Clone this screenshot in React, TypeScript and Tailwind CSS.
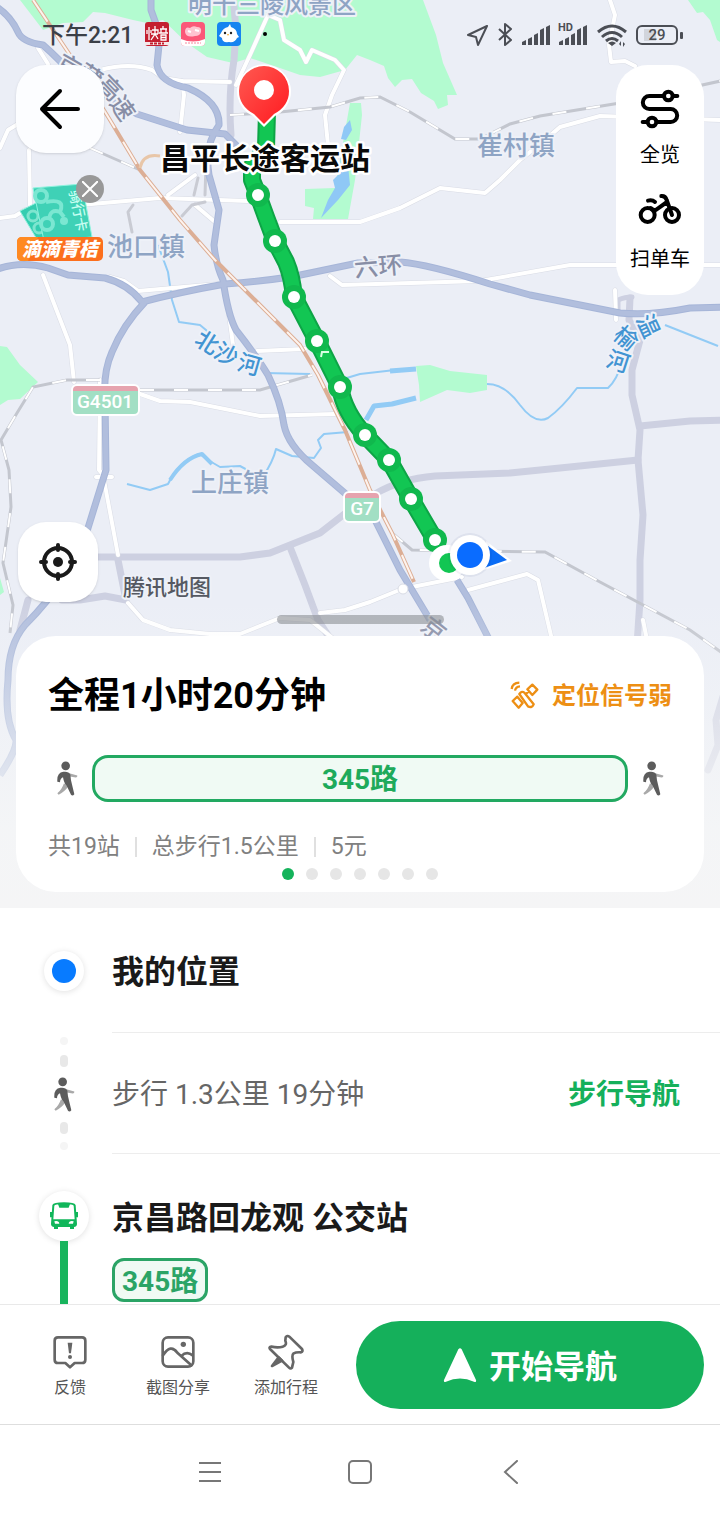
import React from 'react';

const ROUTE =
  'M267 112 L266 148 L252 166 L252 180 L258 195 L266 217 L275 241 L286 262 Q292 276 294 297 L317 341 L340 387 Q344 412 365 435 L389 460 L411 499 L435 540';

const STOPS: [number, number][] = [
  [258, 195], [275, 241], [294, 297], [317, 341], [340, 387],
  [365, 435], [389, 460], [411, 499], [435, 540],
];

const WHITE_ROADS = [
  'M100 70 Q130 62 152 70 L163 78 L182 81 L230 82',
  'M38 48 L48 64',
  'M182 81 L184 95 L180 132',
  'M236 85 L250 55 L268 15 L280 20 L284 40 L300 50 L306 62 L312 50 L335 60 L344 70 L332 95 L325 115 L328 145',
  'M0 148 L8 130 L18 124',
  'M29 150 L30 205 M0 218 L15 216 L25 210 L80 205 L160 198 L248 201 M280 222 L360 222 L400 208 L440 188 L485 193 L500 180 L520 160 L545 140 L560 127 L600 116 L720 120',
  'M43 275 L70 345 L74 382',
  'M110 277 L124 281 L138 291 L218 284',
  'M100 380 L99 470 L104 476 M96 477 L112 477 M104 480 L118 555',
  'M140 394 L160 401 L190 402 L260 416 L335 414',
  'M227 300 L233 345 M257 351 L305 349',
  'M330 276 L342 285 L480 281 L570 265 L720 265',
  'M610 0 L615 15 L609 45 L611 62 L625 61 L635 66',
  'M128 603 L143 620 L170 630 L210 634 L240 634 L280 618 L310 620 L335 640',
  'M320 613 L345 610 L370 602 L402 589 L462 577',
  'M468 590 L490 584 L527 574 L538 580 L552 640',
  'M615 290 L616 320 M643 620 L647 640',
  'M168 195 L195 175 M195 205 L215 222',
];

const GREY_ROADS = [
  'M233 -5 L236 30 L234 60 Q228 95 231 135',
  'M98 557 L240 557 L270 553 L320 533 L347 512 M375 494 Q400 479 435 476 L510 473 L560 468 L638 460',
  'M290 547 L305 585 L318 620 L331 640',
  'M630 298 L629 320 L640 340 L632 370 L632 395 L640 430 L638 460 L643 515 L640 560 L640 600 L637 645',
  'M640 426 L690 421 L725 420',
  'M118 560 L126 600 L105 596 L80 600 L62 600',
  'M28 600 L20 630 M725 690 L716 720 L718 745 L708 770',
];

const HIGHWAYS = [
  'M-5 6 Q10 15 18 32 Q22 42 43 45 Q58 58 80 82 L137 114 L187 130 L225 134 L237 146',
  'M151 -5 L151 10 L160 35 L157 65 Q160 83 188 88 Q220 102 219 125 Q204 145 209 175 L219 210 L214 245 Q216 265 223 280 Q228 315 236 330 Q258 358 268 375 Q281 402 284 425 Q288 445 312 465 L347 495 L375 520 L400 570 L430 620 L440 645',
  'M-5 270 Q20 260 48 268 L68 275 L105 278 Q128 284 142 302 Q180 292 225 284 Q280 280 310 273 L358 263 L400 262 Q428 264 490 284 L530 295 L620 313 Q650 316 690 308 L725 307',
  'M145 302 Q123 325 112 352 Q103 372 105 400 L106 470 L88 528 Q70 580 25 625 Q8 645 8 680 Q4 720 16 740 Q17 750 0 775',
  'M457 580 L468 598 L492 645',
];

const RAILS = [
  'M230 115 L280 112 L330 107 L360 98 L380 97 L410 112 L455 139 L480 139 L510 124 L540 116 L620 103 L725 80',
  'M100 380 L67 380 L33 387 L17 413 L1 440 L9 470 L11 507 L3 563 L13 605 L10 633',
  'M140 390 L260 390 L312 375',
  'M392 533 L412 550 L545 552 L600 582 L690 630 L725 655',
  'M90 148 L140 170',
];

const RIVERS = [
  'M158 245 L168 272 L172 300 L179 322 L200 325 L212 335',
  'M127 484 L150 490 L168 484 Q180 460 200 454 L208 460 L220 467 L240 466 L262 478 Q273 462 276 449 L292 456 L314 458 L321 448 L318 440 L324 434 L348 432',
  'M265 373 L310 374 M340 380 L360 374 L395 370',
  'M487 384 Q505 384 520 405 Q535 425 548 418 Q562 408 577 388 L608 388 Q617 380 622 362',
  'M665 325 L718 346',
];

const ORANGE_RAIL =
  'M33 0 L70 55 L110 120 L140 170 L180 220 L215 260 L255 300 L300 345 L318 375 L345 430 L370 490 L392 533 L414 582';

function MapDrawing() {
  return (
    <svg
      className="absolute inset-0 h-full w-full"
      viewBox="0 0 720 908"
      preserveAspectRatio="xMidYMin slice"
      aria-hidden="true"
      fontFamily='"Noto Sans CJK SC", sans-serif'
    >
      <defs>
        <linearGradient id="haze" x1="0" y1="0" x2="0" y2="1">
          <stop offset="0" stopColor="#f5f6f7" stopOpacity="0" />
          <stop offset="0.75" stopColor="#f5f6f7" stopOpacity="0.9" />
          <stop offset="1" stopColor="#f5f5f6" />
        </linearGradient>
        <linearGradient id="pin" x1="0" y1="0" x2="1" y2="1">
          <stop offset="0" stopColor="#ff5a52" />
          <stop offset="1" stopColor="#ff1a20" />
        </linearGradient>
      </defs>
      <rect width="720" height="908" fill="#ebeef6" />
      <g fill="#b3fbd0">
        <path d="M20 0 L43 30 L63 23 L83 22 L93 12 L105 13 L133 20 L147 23 L163 20 L187 43 L207 57 L233 63 L250 58 L277 67 L300 75 L320 77 L345 70 L357 55 L370 60 L384 66 L388 78 L395 87 L402 80 L412 79 L421 93 L434 101 L438 109 L448 105 L447 95 L457 95 L443 63 L436 35 L423 0Z" />
        <path d="M688 0 L697 13 L703 12 L710 20 L717 40 L720 42 L720 0Z" />
        <path d="M350 103 L361 103 L362 115 L355 180 L348 219 L313 219 L314 208 L305 206 L305 189 L335 188Z" />
        <path d="M0 346 L7 347 L20 365 L38 382 L20 399 L8 400 L0 405Z M0 578 L4 592 L0 595Z" />
        <path d="M416 366 L430 365 L450 371 L487 375 L487 390 L470 393 L447 390 L420 402 L419 385Z" />
      </g>
      <path fill="#8fc8f6" d="M350 120 L352 130 L346 140 L341 139 L344 127Z M340 150 L348 165 L350 185 L338 200 L321 218 L328 200 L335 188 L333 180 L341 172Z" />
      <g fill="none" stroke="#92cbf5" strokeWidth="2" strokeLinejoin="round">
        {RIVERS.map((d) => <path key={d} d={d} />)}
        <path strokeWidth="5" d="M390 371 L416 369 M366 420 L374 406 L392 404 L416 398" />
        <path strokeWidth="4" d="M170 480 Q184 458 202 454 L212 464" />
      </g>
      <g fill="none" strokeLinejoin="round" strokeLinecap="round">
        {GREY_ROADS.map((d) => <path key={d} d={d} stroke="#cdd0e1" strokeWidth="7" />)}
        <path d="M618 311 V301 Q618 298 632 297" stroke="#cdd0e1" strokeWidth="5" />
        {WHITE_ROADS.map((d) => <path key={d} d={d} stroke="#d9dce5" strokeWidth="5" />)}
        {WHITE_ROADS.map((d) => <path key={d} d={d} stroke="#ffffff" strokeWidth="4" />)}
        <path d="M132 232 L128 212 L133 205 M182 216 L192 205 L205 202 M194 195 L198 178 M205 195 L206 165" stroke="#c9cbd3" strokeWidth="3" />
      </g>
      <g fill="none">
        {RAILS.map((d) => <path key={d} d={d} stroke="#c3c6ce" strokeWidth="3" />)}
        {RAILS.map((d) => <path key={d} d={d} stroke="#ffffff" strokeWidth="2" strokeDasharray="14 20" />)}
      </g>
      <g fill="none" strokeLinejoin="round">
        {HIGHWAYS.map((d) => <path key={d} d={d} stroke="#a6b5d8" strokeWidth="7" />)}
        {HIGHWAYS.map((d) => <path key={d} d={d} stroke="#b1bedd" strokeWidth="5" />)}
        <path stroke="#dcae95" strokeWidth="4" d={ORANGE_RAIL} />
        <path stroke="#fdf3ee" strokeWidth="2" strokeDasharray="26 16" d={ORANGE_RAIL} />
        <path stroke="#e8c6a8" strokeWidth="3" d="M140 168 Q143 153 160 156" />
      </g>
      <circle cx="403" cy="589" r="5" fill="#fff" stroke="#d9dce5" />

      <g stroke="#eef1f8" strokeWidth="4" paintOrder="stroke" strokeLinejoin="round" fontWeight="500">
        <g fill="#8ea4c4" fontSize="26">
          <text x="188" y="13" fontSize="24">明十三陵风景区</text>
          <text x="477" y="155">崔村镇</text>
          <text x="107" y="256">池口镇</text>
          <text x="191" y="492">上庄镇</text>
        </g>
        <g fill="#888ea6" fontSize="24">
          <text x="355" y="277" transform="rotate(-5 355 276)">六环</text>
          <text x="-12" y="9" transform="translate(69 66) rotate(30)">京</text>
          <text x="-12" y="9" transform="translate(90 76) rotate(34)">藏</text>
          <text x="-12" y="9" transform="translate(110 88) rotate(46)">高</text>
          <text x="-12" y="9" transform="translate(123 108) rotate(56)">速</text>
          <text x="-12" y="9" transform="translate(434 629) rotate(38)">京</text>
        </g>
        <g fill="#4294d2" fontSize="23">
          <text x="-12" y="9" transform="translate(208 342) rotate(32)">北</text>
          <text x="-12" y="9" transform="translate(227 354) rotate(28)">沙</text>
          <text x="-12" y="9" transform="translate(250 364) rotate(16)">河</text>
          <text x="-12" y="9" transform="translate(649 326) rotate(65)">温</text>
          <text x="-12" y="9" transform="translate(627 338) rotate(40)">榆</text>
          <text x="-12" y="9" transform="translate(619 361) rotate(18)">河</text>
        </g>
        <text x="123" y="595" fill="#555962" fontSize="22">腾讯地图</text>
      </g>

      <g fontFamily='"Roboto", sans-serif' fontWeight="500" fill="#fff" textAnchor="middle">
        <rect x="72" y="386" width="67" height="29" rx="5" fill="#a2dfc4" />
        <path d="M72 391 Q72 385 77 385 H134 Q139 385 139 391Z" fill="#e6a3ae" />
        <rect x="72" y="385" width="67" height="30" rx="5" fill="none" stroke="#fff" strokeWidth="2" />
        <text x="105" y="408" fontSize="19">G4501</text>
        <rect x="344" y="493" width="36" height="29" rx="5" fill="#a2dfc4" />
        <path d="M344 498 Q344 492 349 492 H375 Q380 492 380 498Z" fill="#e6a3ae" />
        <rect x="344" y="492" width="36" height="30" rx="5" fill="none" stroke="#fff" strokeWidth="2" />
        <text x="362" y="515" fontSize="19">G7</text>
      </g>

      <path d={ROUTE} fill="none" stroke="#0da546" strokeWidth="18" strokeLinejoin="round" />
      <path d={ROUTE} fill="none" stroke="#12c653" strokeWidth="14" strokeLinejoin="round" />
      {STOPS.map(([x, y]) => (
        <g key={y}>
          <circle cx={x} cy={y} r="12" fill="#10b84d" />
          <circle cx={x} cy={y} r="6" fill="#fff" />
        </g>
      ))}
      <path d="M321 357 L322 352 L329 352" fill="none" stroke="#d6ffe3" strokeWidth="2" />
      <circle cx="447" cy="563" r="18" fill="#fff" />
      <circle cx="449" cy="563" r="10" fill="#12c653" />
      <path d="M486 541 L512 561 L484 570Z" fill="#fff" />
      <path d="M488 546 L507 560 L484 568Z" fill="#0a6cf5" />
      <circle cx="470" cy="555" r="22" fill="#0a2a60" opacity="0.06" />
      <circle cx="470" cy="555" r="20" fill="#fff" />
      <circle cx="470" cy="555" r="13" fill="#0a6cff" />

      <path d="M264 127 L253 116 A27 27 0 1 1 275 116Z" fill="#fff" />
      <path d="M264 124 L254 114 Q239 106 239 91 A25 25 0 1 1 289 91 Q289 106 274 114Z" fill="url(#pin)" />
      <circle cx="264" cy="90" r="10" fill="#fff" />
      <text x="160" y="169" fontSize="30" fontWeight="700" fill="#0a0a0a" stroke="#fff" strokeWidth="5" paintOrder="stroke" strokeLinejoin="round">昌平长途客运站</text>
      <rect y="600" width="720" height="308" fill="url(#haze)" />
    </svg>
  );
}

function Walker() {
  return (
    <svg className="h-[35px] w-[22px] shrink-0" viewBox="0 0 66 104" aria-hidden="true">
      <path fill="#a9a9a9" d="M40 36 L64 43 Q65 49 59 49 L42 46Z M24 66 L36 76 Q30 88 8 101 L4 96 Q17 86 24 66Z" />
      <path fill="#5c5c5c" d="M4 62 Q2 34 22 32 Q38 30 43 40 Q44 56 48 70 L55 99 Q50 106 45 101 L32 74 Q24 66 21 48 Q12 52 12 63Z" />
      <circle cx="29" cy="14" r="13" fill="#5c5c5c" />
    </svg>
  );
}

function Signal() {
  return (
    <g>
      <path d="M0 26 V23 L4 21 V26Z M6 26 V20 L10 18 V26Z" />
      <path d="M12 16 l4 -2 V26 h-4Z M18 11 l4 -2 V26 h-4Z M24 8 l4 -2 V26 h-4Z" />
    </g>
  );
}

function StatusBar() {
  return (
    <div className="flex h-[65px] items-start justify-between pt-5 pr-[36px] pl-[42px]">
      <div className="flex h-7 items-center gap-3">
        <span className="pt-1 text-[23px] leading-7 font-medium text-[#3b3f47]">下午2:21</span>
        <svg className="size-6" viewBox="0 0 24 24" aria-hidden="true">
          <rect width="24" height="24" rx="3" fill="#c41f30" />
          <path d="M4 5 V18 M2 8 V12 M6 8 V11 M7 8 H13 V12 M6 12 H13 M10 4 V12 L6 18 M10 12 L13 17 M15 7 H22 M18 4 V7 M16 7 V11 M21 7 V11 M14 11 H23 M16 13 H21 V18 H16Z M16 15.500 H21" fill="none" stroke="#fff" strokeWidth="1.300" />
          <path d="M0 20 H24 V23 H0Z" fill="#f5e7e7" />
          <path d="M5 21.500 H19" stroke="#c41f30" strokeWidth="2" strokeDasharray="3 1" />
        </svg>
        <svg className="size-6" viewBox="0 0 24 24" aria-hidden="true">
          <rect width="24" height="24" rx="4" fill="#fb5878" />
          <path d="M4 10 Q4 4 9 6 Q12 3 16 5 Q21 5 20 10 Q19 14 14 14 Q5 16 4 10Z" fill="#ffc3d0" />
          <path d="M7 9 l3 1 m4 -2 l4 1" stroke="#fff" strokeWidth="2" />
          <path d="M0 17 Q12 22 24 17 V20 Q24 24 20 24 H4 Q0 24 0 20Z" fill="#fff" />
          <path d="M4 21 H20" stroke="#f8859b" strokeDasharray="2 1" />
        </svg>
        <svg className="size-6" viewBox="0 0 24 24" aria-hidden="true">
          <rect width="24" height="24" rx="4" fill="#1684f0" />
          <path d="M4 11 Q6 6 11 5 L13 2 L14 5 Q20 7 20 12 L22 15 L20 16 Q18 21 12 20 Q5 21 5 16 L2 14Z" fill="#fff" />
          <circle cx="8" cy="11" r="1.200" fill="#222" />
          <circle cx="14" cy="11" r="1.200" fill="#222" />
          <path d="M10 12 h2 l-1 2Z" fill="#f5a623" />
        </svg>
        <span className="ml-2.5 size-1 rounded-full bg-black" />
      </div>
      <svg className="h-7 w-[217px]" viewBox="0 0 217 28" fill="#4b4e55" aria-hidden="true">
        <path d="M20 6 L1 15 L9 17 L11 25Z" fill="none" stroke="#4b4e55" strokeWidth="2" strokeLinejoin="round" />
        <path d="M32 9 L44 20 L38 25 V4 L44 9 L32 20" fill="none" stroke="#4b4e55" strokeWidth="2" strokeLinejoin="round" />
        <g transform="translate(55 -1)"><Signal /></g>
        <g transform="translate(92 -1)"><Signal /></g>
        <text x="91" y="11" fontFamily='"Roboto", sans-serif' fontSize="11" fontWeight="700">HD</text>
        <g fill="none" stroke="#4b4e55" strokeWidth="3">
          <path d="M131 12 Q145 0 159 12" />
          <path d="M135 17 Q145 8 155 17" />
          <path d="M139 21 Q145 16 151 21" />
        </g>
        <path d="M141 23 Q145 20 149 23 L145 26Z M152 24 l2 -3 v5 M156 22 v5 l2 -3" />
        <rect x="177" y="9" width="12" height="12" fill="#d2d5dc" />
        <rect x="170" y="6" width="40" height="18" rx="5" fill="none" stroke="#4b4e55" strokeWidth="2" />
        <rect x="213" y="12" width="3" height="7" rx="1" />
        <text x="190" y="20" textAnchor="middle" fontFamily='"Roboto", sans-serif' fontSize="15" fontWeight="500">29</text>
      </svg>
    </div>
  );
}

function Promo() {
  return (
    <div className="relative mt-5 h-[91px] w-[88px]">
      <a href="#card" aria-label="滴滴青桔骑行卡" className="block">
        <svg className="h-[91px] w-[88px]" viewBox="0 0 88 91" aria-hidden="true">
          <path d="M4 38 L22 29 L44 70 L22 68Z" fill="#34cdb0" stroke="#8df0dc" />
          <g fill="none" stroke="#7ee5cf" strokeWidth="3"><circle cx="17" cy="43" r="5" /><circle cx="23" cy="55" r="5" /></g>
          <path d="M17 15 L66 11 L76 64 L28 68Z" fill="#3fd1b6" stroke="#8ff3df" />
          <g fill="none" stroke="#7be7d2" strokeWidth="4">
            <circle cx="25" cy="23" r="6" /><circle cx="31" cy="51" r="6" />
            <path d="M30 29 Q50 25 44 39 Q34 35 33 47 M44 39 L48 44" />
          </g>
          <circle cx="48" cy="48" r="4" fill="#7be7d2" />
          <text transform="translate(53 18) rotate(78)" fontFamily='"Noto Sans CJK SC", sans-serif' fontSize="14" fontWeight="500" fill="#c8fff2">骑行卡</text>
          <rect x="1" y="64" width="86" height="24" rx="5" fill="#fc6f1d" />
          <path d="M6 64 H22 L12 88 H6 Q1 88 1 83 V69 Q1 64 6 64Z" fill="#ff8a22" />
          <text x="44" y="83" textAnchor="middle" fontFamily='"Noto Sans CJK SC", sans-serif' fontSize="19" fontWeight="900" fontStyle="italic" fill="#fff">滴滴青桔</text>
        </svg>
      </a>
      <button type="button" aria-label="关闭" className="absolute top-0.5 right-0 flex size-7 items-center justify-center rounded-full bg-[#989898]">
        <svg className="size-4" viewBox="0 0 16 16" aria-hidden="true"><path d="M0 0 L16 16 M16 0 L0 16" stroke="#fff" strokeWidth="2" /></svg>
      </button>
    </div>
  );
}

function RouteCard() {
  return (
    <div className="mx-4 mt-3 rounded-[40px] bg-white px-8 pt-[36px] pb-3">
      <div className="flex items-center justify-between">
        <h1 className="text-[36px] leading-[48px] font-bold text-black">全程1小时20分钟</h1>
        <div className="flex items-center gap-3 text-[#ed8f14]">
          <svg className="size-[30px]" viewBox="0 0 90 90" fill="none" stroke="currentColor" strokeWidth="7" strokeLinejoin="round" aria-hidden="true">
            <path d="M5 24 Q7 6 28 5 M15 29 Q17 17 30 16" />
            <path d="M28 39 Q36 28 44 36 L71 70 Q66 82 54 76Z" />
            <path d="M52 25 L67 11 L82 26 L67 42Z M8 60 L22 47 L38 66 L26 80Z M56 32 L46 40 M34 56 L30 60" />
          </svg>
          <span className="text-[24px] leading-8 font-bold">定位信号弱</span>
        </div>
      </div>
      <div className="mt-[35px] flex items-center gap-3.5 px-2">
        <Walker />
        <div className="h-[47px] flex-1 rounded-[16px] border-3 border-[#22a961] bg-[#f0faf4] text-center text-[28px] leading-[44px] font-bold text-[#1eaa5b]">345路</div>
        <Walker />
      </div>
      <div className="mt-[27px] flex items-center gap-[15px] text-[23px] leading-9 text-[#808080]">
        <span>共19站</span>
        <span className="h-5 w-0.5 bg-[#e0e0e0]" />
        <span>总步行1.5公里</span>
        <span className="h-5 w-0.5 bg-[#e0e0e0]" />
        <span>5元</span>
      </div>
      <div className="mt-[3px] flex justify-center gap-3">
        <span className="size-3 rounded-full bg-[#15b35b]" />
        {[1, 2, 3, 4, 5, 6].map((n) => <span key={n} className="size-3 rounded-full bg-[#e6e6e6]" />)}
      </div>
    </div>
  );
}

function MapSection() {
  return (
    <section className="relative overflow-hidden pb-4">
      <MapDrawing />
      <div className="relative">
        <StatusBar />
        <div className="flex items-start justify-between px-4">
          <div className="flex flex-col items-start">
            <button type="button" aria-label="返回" className="flex size-[88px] items-center justify-center rounded-[30px] bg-[#fcfdff] shadow-sm">
              <svg className="size-11" viewBox="0 0 44 44" fill="none" stroke="#000" strokeWidth="4" strokeLinecap="round" strokeLinejoin="round" aria-hidden="true">
                <path d="M40 22 H4 M22 4 L4 22 L22 40" />
              </svg>
            </button>
            <Promo />
            <button type="button" aria-label="定位" className="mt-[258px] ml-0.5 flex size-20 items-center justify-center rounded-[28px] bg-white shadow-sm">
              <svg className="size-10" viewBox="0 0 40 40" fill="none" stroke="#1a1a1a" strokeWidth="4" strokeLinecap="round" aria-hidden="true">
                <circle cx="20" cy="20" r="14" />
                <path d="M20 3 V8 M20 32 V37 M3 20 H8 M32 20 H37" />
                <circle cx="20" cy="20" r="5" fill="#1a1a1a" stroke="none" />
              </svg>
            </button>
          </div>
          <div className="flex w-[88px] flex-col items-center rounded-[32px] bg-white pt-6 pb-[22px]">
            <button type="button" className="flex flex-col items-center text-[20px] leading-7 text-black">
              <svg className="mb-3 h-10 w-[42px]" viewBox="837 267 126 120" fill="none" stroke="#000" strokeWidth="12" strokeLinecap="round" aria-hidden="true">
                <path d="M952 288 H868 A19 19 0 0 0 868 327 H932 A19 19 0 0 1 932 366 H848" />
                <circle cx="925" cy="288" r="13" fill="#fff" />
                <circle cx="876" cy="366" r="13" fill="#fff" />
              </svg>
              全览
            </button>
            <button type="button" className="mt-6 flex flex-col items-center text-[20px] leading-7 text-black">
              <svg className="mb-5 h-8 w-[44px]" viewBox="834 585 132 96" fill="none" stroke="#000" strokeWidth="12" strokeLinecap="round" strokeLinejoin="round" aria-hidden="true">
                <circle cx="863" cy="651" r="21" />
                <circle cx="936" cy="651" r="21" />
                <path d="M904 594 Q916 593 920 606 L936 651 M921 612 L890 634 Q882 640 872 630 M864 608 Q877 605 885 612" />
              </svg>
              扫单车
            </button>
          </div>
        </div>
        <div className="mx-auto mt-[13px] h-[9px] w-[167px] rounded-full bg-[#8c8f94]/60" />
        <RouteCard />
      </div>
    </section>
  );
}

function Steps() {
  return (
    <ol className="flex-1 bg-white">
      <li className="flex pl-4">
        <div className="flex w-24 items-center justify-center">
          <span className="flex size-10 items-center justify-center rounded-full bg-white shadow-[0_1px_6px_rgba(0,0,0,0.12)]">
            <span className="size-6 rounded-full bg-[#087bff]" />
          </span>
        </div>
        <div className="flex h-[125px] flex-1 items-center border-b border-[#ededed] pt-1">
          <h2 className="text-[32px] leading-10 font-bold text-[#1a1a1a]">我的位置</h2>
        </div>
      </li>
      <li className="flex pl-4">
        <div className="flex w-24 flex-col items-center justify-center">
          <span className="size-2 rounded-full bg-[#f5f5f5]" />
          <span className="mt-2.5 h-3 w-2 rounded-full bg-[#e8e8e8]" />
          <span className="my-2.5 flex"><Walker /></span>
          <span className="h-3 w-2 rounded-full bg-[#e8e8e8]" />
          <span className="mt-2 size-2 rounded-full bg-[#f5f5f5]" />
        </div>
        <div className="flex h-[121px] flex-1 items-center justify-between border-b border-[#ededed] pt-1 pr-10">
          <span className="text-[28px] leading-9 text-[#666666]">步行 1.3公里 19分钟</span>
          <a href="#walk" className="text-[28px] leading-9 font-bold text-[#15b05b]">步行导航</a>
        </div>
      </li>
      <li className="flex pl-4">
        <div className="flex w-24 flex-col items-center pt-[37px]">
          <span className="flex size-[50px] shrink-0 items-center justify-center rounded-full bg-white shadow-[0_1px_6px_rgba(0,0,0,0.12)]">
            <svg className="size-7" viewBox="0 0 84 84" aria-hidden="true">
              <path d="M10 10 Q12 4 42 4 Q72 4 74 10 L78 66 Q78 72 70 72 H14 Q6 72 6 66Z" fill="#fff" stroke="#10b65a" strokeWidth="6" />
              <path d="M6 52 H78 V68 Q78 74 70 74 H14 Q6 74 6 68Z M24 6 H60 L56 17 H28Z M0 30 h8 v16 h-8Z M76 30 h8 v16 h-8Z M12 72 h12 v9 h-12Z M60 72 h12 v9 h-12Z" fill="#10b65a" />
              <path d="M13 58 q14 -3 15 7 h-13Z M71 58 q-14 -3 -15 7 h13Z" fill="#fff" />
            </svg>
          </span>
          <span className="w-2 flex-1 bg-[#18b45d]" />
        </div>
        <div className="flex flex-1 flex-col items-start pt-11 pb-0.5">
          <h2 className="text-[32px] leading-10 font-bold text-[#1a1a1a]">京昌路回龙观 公交站</h2>
          <span className="mt-5 h-11 rounded-[12px] border-3 border-[#2ba466] bg-[#f0faf4] px-[7px] text-[28px] leading-[42px] font-bold text-[#2ba466]">345路</span>
        </div>
      </li>
    </ol>
  );
}

function FooterAction({ label, children }: { label: string; children: React.ReactNode }) {
  return (
    <button type="button" className="flex flex-1 flex-col items-center gap-1.5 text-[16px] leading-6 text-[#555555]">
      <svg className="size-9" viewBox="0 0 108 108" fill="none" stroke="#666" strokeWidth="8" strokeLinejoin="round" strokeLinecap="round" aria-hidden="true">
        {children}
      </svg>
      {label}
    </button>
  );
}

function Footer() {
  return (
    <footer className="bg-white">
      <div className="flex items-center gap-4 border-t border-[#e9e9e9] px-4 pt-4 pb-[15px]">
        <div className="flex w-[324px] pt-1">
          <FooterAction label="反馈">
            <path d="M18 10 H90 Q100 10 100 20 V77 Q100 87 90 87 H68 L54 100 L40 87 H18 Q8 87 8 77 V20 Q8 10 18 10Z" />
            <path d="M47 26 H61 L57 58 H51Z" fill="#666" stroke="none" />
            <circle cx="54" cy="69" r="6" fill="#666" stroke="none" />
          </FooterAction>
          <FooterAction label="截图分享">
            <rect x="8" y="10" width="92" height="88" rx="16" />
            <path d="M9 64 Q32 28 52 56 L94 94 M64 66 Q80 50 98 64" />
            <circle cx="70" cy="31" r="8" fill="#666" stroke="none" />
          </FooterAction>
          <FooterAction label="添加行程">
            <path d="M53 10 Q58 3 64 8 L102 45 Q106 52 99 55 Q84 54 77 58 Q70 64 76 84 L72 101 Q68 106 63 101 L6 45 Q2 39 10 38 Q30 42 44 38 Q58 34 52 20Z" />
            <path d="M32 70 L12 96 L42 80Z" fill="#666" />
          </FooterAction>
        </div>
        <button type="button" className="flex h-[88px] flex-1 items-center justify-center gap-3 rounded-full bg-[#15b05b] text-[32px] leading-10 font-bold text-white">
          <svg className="size-[34px]" viewBox="0 0 102 102" fill="#fff" aria-hidden="true">
            <path d="M46 4 Q51 -2 56 4 L99 96 Q101 104 93 101 Q51 82 9 101 Q1 104 3 96Z" />
          </svg>
          <span className="pt-1">开始导航</span>
        </button>
      </div>
      <nav className="flex h-[96px] items-center justify-center border-t border-[#dedede] pb-0.5">
        <button type="button" aria-label="最近任务" className="flex w-[150px] justify-center">
          <svg className="size-6" viewBox="0 0 24 24" stroke="#777" strokeWidth="2" aria-hidden="true"><path d="M1 3 H23 M1 12 H23 M1 21 H23" /></svg>
        </button>
        <button type="button" aria-label="主屏幕" className="flex w-[150px] justify-center">
          <svg className="size-6" viewBox="0 0 24 24" fill="none" stroke="#777" strokeWidth="2" aria-hidden="true"><rect x="1" y="1" width="22" height="22" rx="4" /></svg>
        </button>
        <button type="button" aria-label="后退" className="flex w-[150px] justify-center">
          <svg className="size-6" viewBox="0 0 24 24" fill="none" stroke="#777" strokeWidth="2" strokeLinecap="round" aria-hidden="true"><path d="M19 1 L7 12 L19 23" /></svg>
        </button>
      </nav>
    </footer>
  );
}

export default function App() {
  return (
    <main className="flex min-h-screen flex-col bg-white font-[Roboto,'Noto_Sans_CJK_SC',sans-serif]">
      <MapSection />
      <Steps />
      <Footer />
    </main>
  );
}
